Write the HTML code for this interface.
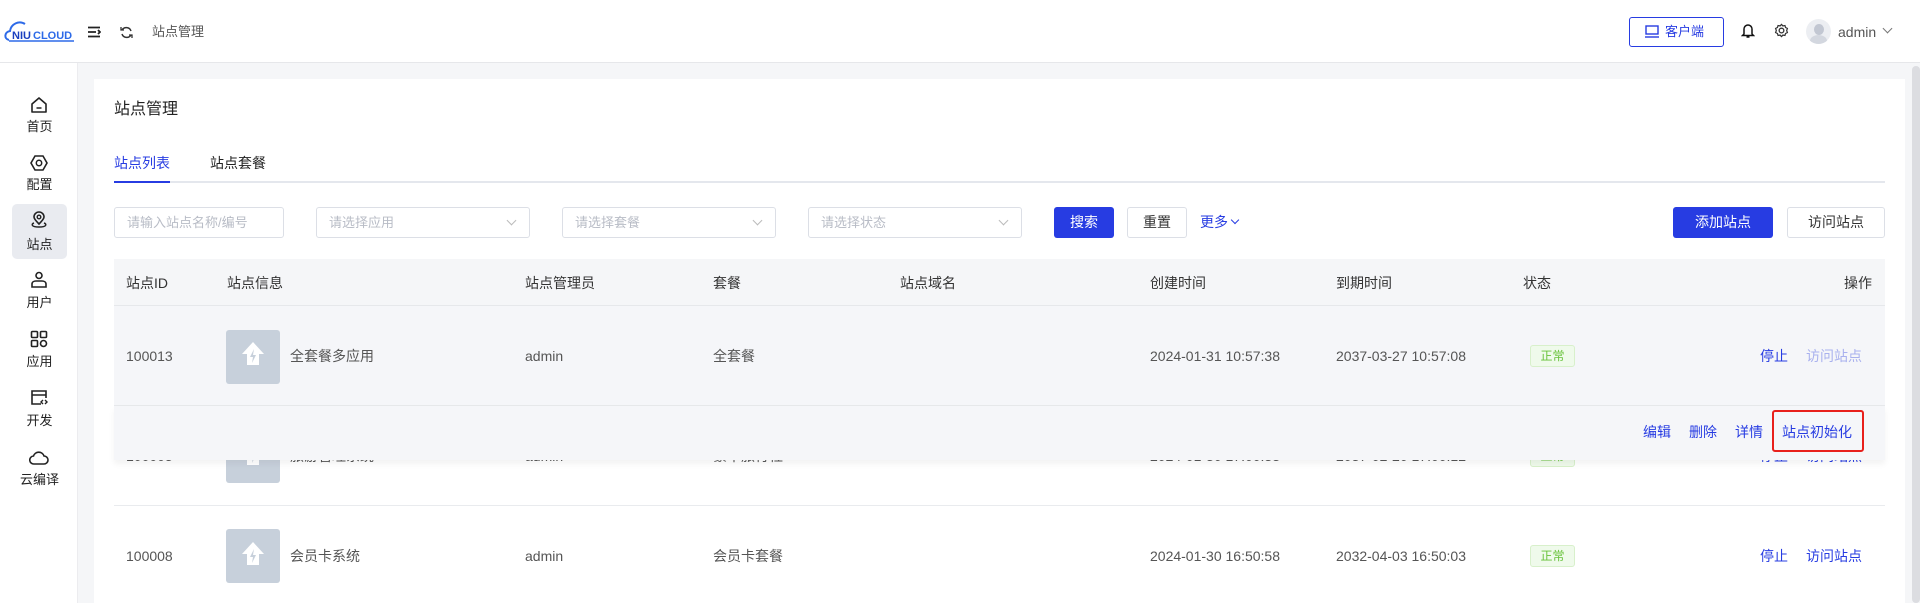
<!DOCTYPE html>
<html><head><meta charset="utf-8"><style>
*{box-sizing:border-box;margin:0;padding:0}
body{width:1920px;height:603px;overflow:hidden;background:#f5f6f8;font-family:"Liberation Sans","Noto Sans CJK SC",sans-serif;color:#333;font-size:14px;position:relative}
.a{position:absolute;white-space:nowrap;line-height:20px}
.hdr{left:0;top:0;width:1920px;height:63px;background:#fff;border-bottom:1px solid #e6e7ea}
.side{left:0;top:63px;width:78px;height:540px;background:#fff;border-right:1px solid #ececef}
.si{position:absolute;left:12px;width:55px;text-align:center;font-size:13px;color:#222;line-height:18px}
.card{left:94px;top:79px;width:1811px;height:524px;background:#fff}
.inp{height:31px;border:1px solid #dcdfe6;border-radius:3px;color:#b8bcc6;font-size:13px;padding:0 12px;line-height:29px;background:#fff}
.inp .chev{position:absolute;right:14px;top:9px;width:7px;height:7px;border-right:1px solid #bbb;border-bottom:1px solid #bbb;transform:rotate(45deg)}
.btn{height:31px;border-radius:3px;font-size:14px;text-align:center;line-height:29px}
.th{font-size:14px;color:#333;top:273px}
.td{font-size:14px;color:#555}
.img{width:54px;height:54px;background:#c7d0db;border-radius:3px}
.tag{width:45px;height:22px;border:1px solid #d8f0cb;background:#effaeb;color:#67c23a;font-size:12px;text-align:center;line-height:20px;border-radius:3px}
.lnk{color:#273ce2;font-size:14px}
</style></head><body>
<div class="a hdr"></div>
<svg class="a" style="left:4px;top:18px" width="72" height="26" viewBox="0 0 72 26"><path d="M5 22 C0 21 0 14 6 13 C7 6 15 2 21 6" fill="none" stroke="#2d6ae8" stroke-width="2"/><path d="M5 23 H70" stroke="#2d6ae8" stroke-width="1.5"/><text x="8" y="21" font-size="11" font-weight="bold" fill="#1a3fbf" font-family="Liberation Sans">NIU</text><text x="29" y="21" font-size="11" font-weight="bold" fill="#2d6ae8" font-family="Liberation Sans">CLOUD</text></svg>
<svg class="a" style="left:88px;top:26px" width="13" height="12"><path d="M0 1.5H12M0 6H8M0 10.5H12M10 4l2 2-2 2" stroke="#222" stroke-width="1.8" fill="none"/></svg>
<svg class="a" style="left:120px;top:26px" width="13" height="13" viewBox="0 0 13 13"><path d="M11 5A5 5 0 0 0 2 4M2 8A5 5 0 0 0 11 9" stroke="#333" stroke-width="1.5" fill="none"/><path d="M1 1v3h3M12 12V9H9" stroke="#333" stroke-width="1.3" fill="none"/></svg>
<div class="a" style="left:152px;top:22px;font-size:13px;color:#555">站点管理</div>
<div class="a btn" style="left:1629px;top:17px;width:95px;height:30px;border:1px solid #273ce2;color:#273ce2;font-size:13px;line-height:28px;padding-left:16px">客户端</div>
<svg class="a" style="left:1645px;top:25px" width="14" height="13"><rect x="1" y="1" width="12" height="8" fill="none" stroke="#273ce2" stroke-width="1.4"/><path d="M0 12H14" stroke="#273ce2" stroke-width="1.4"/></svg>
<svg class="a" style="left:1741px;top:22px" width="14" height="16"><path d="M3 12V7a4 4 0 0 1 8 0v5l1.5 1.5H1.5zM5.5 15h3" stroke="#111" stroke-width="1.5" fill="none"/></svg>
<svg class="a" style="left:1774px;top:23px" width="15" height="15" viewBox="0 0 16 16"><circle cx="8" cy="8" r="2.5" fill="none" stroke="#333" stroke-width="1.4"/><path d="M8 1.5l1.5 1.6 2.2-.4.6 2.1 2 1-.8 2.2.8 2.2-2 1-.6 2.1-2.2-.4L8 14.5 6.5 12.9l-2.2.4-.6-2.1-2-1 .8-2.2-.8-2.2 2-1 .6-2.1 2.2.4z" fill="none" stroke="#333" stroke-width="1.3"/></svg>
<div class="a" style="left:1806px;top:19px;width:25px;height:25px;border-radius:50%;background:#eceef2;overflow:hidden"><div style="position:absolute;left:8px;top:5px;width:10px;height:11px;border-radius:50%;background:#c2c7d2"></div><div style="position:absolute;left:4px;top:16px;width:17px;height:12px;border-radius:50%;background:#d3d7df"></div></div>
<div class="a" style="left:1838px;top:22px;font-size:14px;color:#555">admin</div>
<div class="a" style="left:1884px;top:25px;width:7px;height:7px;border-right:1px solid #777;border-bottom:1px solid #777;transform:rotate(45deg)"></div>

<div class="a side"></div>
<div class="a" style="left:12px;top:204px;width:55px;height:55px;background:#e9ebf0;border-radius:5px"></div>
<svg class="a" style="left:30px;top:96px" width="18" height="18"><path d="M2 8L9 2l7 6v8H2z" fill="none" stroke="#222" stroke-width="1.6" stroke-linejoin="round"/><path d="M6.5 12h5" stroke="#222" stroke-width="1.5"/></svg>
<div class="si" style="top:118px">首页</div>
<svg class="a" style="left:30px;top:154px" width="18" height="18"><path d="M5 2h8l4 7-4 7H5L1 9z" fill="none" stroke="#222" stroke-width="1.6"/><circle cx="9" cy="9" r="2.7" fill="none" stroke="#222" stroke-width="1.5"/></svg>
<div class="si" style="top:176px">配置</div>
<svg class="a" style="left:30px;top:211px" width="18" height="18"><path d="M9 13C5 9 4 7.5 4 6a5 5 0 0 1 10 0c0 1.5-1 3-5 7z" fill="none" stroke="#222" stroke-width="1.6"/><circle cx="9" cy="6" r="1.8" fill="none" stroke="#222" stroke-width="1.4"/><path d="M4 12c-3 1-3 4 5 4s8-3 5-4" fill="none" stroke="#222" stroke-width="1.5"/></svg>
<div class="si" style="top:236px">站点</div>
<svg class="a" style="left:30px;top:271px" width="18" height="18"><circle cx="9" cy="4.5" r="3" fill="none" stroke="#222" stroke-width="1.6"/><path d="M2 16v-3c0-2 2-3 4-3h6c2 0 4 1 4 3v3z" fill="none" stroke="#222" stroke-width="1.6"/></svg>
<div class="si" style="top:294px">用户</div>
<svg class="a" style="left:30px;top:330px" width="18" height="18"><rect x="1.5" y="1.5" width="6" height="6" rx="1" fill="none" stroke="#222" stroke-width="1.6"/><rect x="10.5" y="1.5" width="6" height="6" rx="1" fill="none" stroke="#222" stroke-width="1.6"/><rect x="1.5" y="10.5" width="6" height="6" rx="1" fill="none" stroke="#222" stroke-width="1.6"/><rect x="10.5" y="10.5" width="6" height="6" rx="3" fill="none" stroke="#222" stroke-width="1.6"/></svg>
<div class="si" style="top:353px">应用</div>
<svg class="a" style="left:30px;top:389px" width="18" height="18"><path d="M11 15H2V2h14v7M2 6h14" fill="none" stroke="#222" stroke-width="1.6"/><path d="M13 11l-2 2 2 2M15 11l2 2-2 2" fill="none" stroke="#222" stroke-width="1.4"/></svg>
<div class="si" style="top:412px">开发</div>
<svg class="a" style="left:29px;top:450px" width="20" height="16"><path d="M5 14a4 4 0 0 1-.5-8A5.5 5.5 0 0 1 15 6a4 4 0 0 1 0 8z" fill="none" stroke="#222" stroke-width="1.6"/></svg>
<div class="si" style="top:471px;left:8px;width:63px">云编译</div>

<div class="a card"></div>
<div class="a" style="left:1912px;top:66px;width:8px;height:537px;background:#dcdde1;border-radius:4px"></div>
<div class="a" style="left:114px;top:100px;font-size:16px;color:#222">站点管理</div>
<div class="a" style="left:114px;top:153px;font-size:14px;color:#273ce2">站点列表</div>
<div class="a" style="left:210px;top:153px;font-size:14px;color:#222">站点套餐</div>
<div class="a" style="left:114px;top:181px;width:1771px;height:2px;background:#e4e7ed"></div>
<div class="a" style="left:114px;top:181px;width:56px;height:2px;background:#273ce2"></div>

<div class="a inp" style="left:114px;top:207px;width:170px">请输入站点名称/编号</div>
<div class="a inp" style="left:316px;top:207px;width:214px">请选择应用<i class="chev"></i></div>
<div class="a inp" style="left:562px;top:207px;width:214px">请选择套餐<i class="chev"></i></div>
<div class="a inp" style="left:808px;top:207px;width:214px">请选择状态<i class="chev"></i></div>
<div class="a btn" style="left:1054px;top:207px;width:60px;background:#273ce2;color:#fff;line-height:31px">搜索</div>
<div class="a btn" style="left:1127px;top:207px;width:60px;border:1px solid #dcdfe6;color:#333">重置</div>
<div class="a" style="left:1200px;top:212px;color:#273ce2;font-size:14px">更多</div>
<div class="a" style="left:1232px;top:217px;width:6px;height:6px;border-right:1px solid #273ce2;border-bottom:1px solid #273ce2;transform:rotate(45deg)"></div>
<div class="a btn" style="left:1673px;top:207px;width:100px;background:#273ce2;color:#fff;line-height:31px">添加站点</div>
<div class="a btn" style="left:1787px;top:207px;width:98px;border:1px solid #dcdfe6;color:#333">访问站点</div>

<div class="a" style="left:114px;top:259px;width:1771px;height:47px;background:#f5f6f8;border-bottom:1px solid #e6e8eb"></div>
<div class="a th" style="left:126px">站点ID</div>
<div class="a th" style="left:227px">站点信息</div>
<div class="a th" style="left:525px">站点管理员</div>
<div class="a th" style="left:713px">套餐</div>
<div class="a th" style="left:900px">站点域名</div>
<div class="a th" style="left:1150px">创建时间</div>
<div class="a th" style="left:1336px">到期时间</div>
<div class="a th" style="left:1523px">状态</div>
<div class="a th" style="left:1844px">操作</div>

<!-- row3 -->
<div class="a" style="left:114px;top:505px;width:1771px;height:1px;background:#e9ebee"></div>
<div class="a td" style="left:126px;top:546px">100008</div>
<div class="a img" style="left:226px;top:529px"></div>
<svg class="a" style="left:240px;top:540px" width="26" height="30" viewBox="0 0 26 30"><path d="M13 2L2 14h5v11h12V14h5z" fill="#fff"/><path d="M14 9l-4 8h3l-1 6 4-8h-3z" fill="#c7d0db"/></svg>
<div class="a td" style="left:290px;top:546px">会员卡系统</div>
<div class="a td" style="left:525px;top:546px">admin</div>
<div class="a td" style="left:713px;top:546px">会员卡套餐</div>
<div class="a td" style="left:1150px;top:546px">2024-01-30 16:50:58</div>
<div class="a td" style="left:1336px;top:546px">2032-04-03 16:50:03</div>
<div class="a tag" style="left:1530px;top:545px">正常</div>
<div class="a lnk" style="left:1760px;top:546px">停止</div>
<div class="a lnk" style="left:1806px;top:546px">访问站点</div>

<!-- row2 (partially hidden) -->
<div class="a td" style="left:126px;top:446px">100005</div>
<div class="a img" style="left:226px;top:429px"></div>
<svg class="a" style="left:240px;top:440px" width="26" height="30" viewBox="0 0 26 30"><path d="M13 2L2 14h5v11h12V14h5z" fill="#fff"/><path d="M14 9l-4 8h3l-1 6 4-8h-3z" fill="#c7d0db"/></svg>
<div class="a td" style="left:290px;top:446px">旅游管理系统</div>
<div class="a td" style="left:525px;top:446px">admin</div>
<div class="a td" style="left:713px;top:446px">豪华旅行社</div>
<div class="a td" style="left:1150px;top:446px">2024-01-30 17:00:33</div>
<div class="a td" style="left:1336px;top:446px">2037-02-20 17:00:12</div>
<div class="a tag" style="left:1530px;top:445px">正常</div>
<div class="a lnk" style="left:1760px;top:446px">停止</div>
<div class="a lnk" style="left:1806px;top:446px">访问站点</div>

<!-- row1 hovered -->
<div class="a" style="left:114px;top:306px;width:1771px;height:100px;background:#f5f6f9;border-bottom:1px solid #e6e8eb"></div>
<div class="a td" style="left:126px;top:346px">100013</div>
<div class="a img" style="left:226px;top:330px"></div>
<svg class="a" style="left:240px;top:340px" width="26" height="30" viewBox="0 0 26 30"><path d="M13 2L2 14h5v11h12V14h5z" fill="#fff"/><path d="M14 9l-4 8h3l-1 6 4-8h-3z" fill="#c7d0db"/></svg>
<div class="a td" style="left:290px;top:346px">全套餐多应用</div>
<div class="a td" style="left:525px;top:346px">admin</div>
<div class="a td" style="left:713px;top:346px">全套餐</div>
<div class="a td" style="left:1150px;top:346px">2024-01-31 10:57:38</div>
<div class="a td" style="left:1336px;top:346px">2037-03-27 10:57:08</div>
<div class="a tag" style="left:1530px;top:345px">正常</div>
<div class="a lnk" style="left:1760px;top:346px">停止</div>
<div class="a lnk" style="left:1806px;top:346px;color:#a9b1ee">访问站点</div>

<!-- popup action row -->
<div class="a" style="left:114px;top:406px;width:1771px;height:54px;background:#f5f6f9;box-shadow:0 4px 6px rgba(0,0,0,0.05)"></div>
<div class="a lnk" style="left:1643px;top:422px">编辑</div>
<div class="a lnk" style="left:1689px;top:422px">删除</div>
<div class="a lnk" style="left:1735px;top:422px">详情</div>
<div class="a lnk" style="left:1782px;top:422px">站点初始化</div>
<div class="a" style="left:1772px;top:410px;width:92px;height:42px;border:2px solid #e8201c;border-radius:3px"></div>
</body></html>
